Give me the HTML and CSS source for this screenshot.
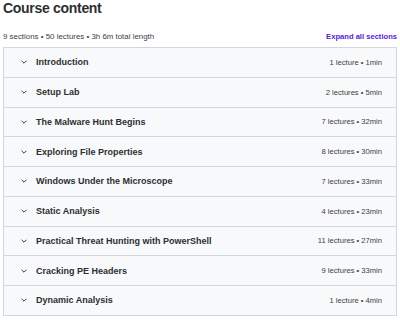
FILE: index.html
```html
<!DOCTYPE html>
<html lang="en">
<head>
  <meta charset="UTF-8">
  <title>Course content</title>
  <link rel="stylesheet" href="styles.css">
</head>
<body>
  <h2 class="title">Course content</h2>

  <div class="summary">
    <span>9 sections • 50 lectures • 3h 6m total length</span>
    <button class="expand-btn">Expand all sections</button>
  </div>

  <div class="sections">
    <div class="section">
      <svg class="chevron" viewBox="0 0 10 10"><polyline points="2,3.5 5,6.5 8,3.5"/></svg>
      <span class="section-title">Introduction</span>
      <span class="section-meta">1 lecture • 1min</span>
    </div>
    <div class="section">
      <svg class="chevron" viewBox="0 0 10 10"><polyline points="2,3.5 5,6.5 8,3.5"/></svg>
      <span class="section-title">Setup Lab</span>
      <span class="section-meta">2 lectures • 5min</span>
    </div>
    <div class="section">
      <svg class="chevron" viewBox="0 0 10 10"><polyline points="2,3.5 5,6.5 8,3.5"/></svg>
      <span class="section-title">The Malware Hunt Begins</span>
      <span class="section-meta">7 lectures • 32min</span>
    </div>
    <div class="section">
      <svg class="chevron" viewBox="0 0 10 10"><polyline points="2,3.5 5,6.5 8,3.5"/></svg>
      <span class="section-title">Exploring File Properties</span>
      <span class="section-meta">8 lectures • 30min</span>
    </div>
    <div class="section">
      <svg class="chevron" viewBox="0 0 10 10"><polyline points="2,3.5 5,6.5 8,3.5"/></svg>
      <span class="section-title">Windows Under the Microscope</span>
      <span class="section-meta">7 lectures • 33min</span>
    </div>
    <div class="section">
      <svg class="chevron" viewBox="0 0 10 10"><polyline points="2,3.5 5,6.5 8,3.5"/></svg>
      <span class="section-title">Static Analysis</span>
      <span class="section-meta">4 lectures • 23min</span>
    </div>
    <div class="section">
      <svg class="chevron" viewBox="0 0 10 10"><polyline points="2,3.5 5,6.5 8,3.5"/></svg>
      <span class="section-title">Practical Threat Hunting with PowerShell</span>
      <span class="section-meta">11 lectures • 27min</span>
    </div>
    <div class="section">
      <svg class="chevron" viewBox="0 0 10 10"><polyline points="2,3.5 5,6.5 8,3.5"/></svg>
      <span class="section-title">Cracking PE Headers</span>
      <span class="section-meta">9 lectures • 33min</span>
    </div>
    <div class="section">
      <svg class="chevron" viewBox="0 0 10 10"><polyline points="2,3.5 5,6.5 8,3.5"/></svg>
      <span class="section-title">Dynamic Analysis</span>
      <span class="section-meta">1 lecture • 4min</span>
    </div>
  </div>
</body>
</html>
```

FILE: styles.css
```css
* {
  box-sizing: border-box;
}
body {
  font-family: "Liberation Sans", Arial, sans-serif;
  color: #2d2f31;
  background-color: #fff;
  margin: 0;
  padding: 0 3px;
}
.title {
  font-size: 14px;
  line-height: 16px;
  font-weight: 700;
  letter-spacing: -0.3px;
  margin: 0;
}
.summary {
  display: flex;
  justify-content: space-between;
  align-items: center;
  height: 10px;
  margin-top: 15px;
  margin-bottom: 6px;
  font-size: 7.9px;
  color: #3e4143;
}
.expand-btn {
  font-family: inherit;
  font-size: 7.6px;
  font-weight: 700;
  color: #5624d0;
  background: none;
  border: none;
  padding: 0;
  cursor: pointer;
}
.sections {
  border: 1px solid #d1d7dc;
  border-bottom: none;
}
.section {
  display: flex;
  align-items: center;
  height: 29.75px;
  padding: 0 14px 0 16px;
  background-color: #f7f9fa;
  border-bottom: 1px solid #d1d7dc;
}
.chevron {
  width: 8px;
  height: 8px;
  margin-right: 8px;
  fill: none;
  stroke: #2d2f31;
  stroke-width: 1.2;
}
.section-title {
  font-size: 9px;
  font-weight: 700;
  flex-grow: 1;
}
.section-meta {
  font-size: 7.6px;
  color: #3e4143;
}
```
